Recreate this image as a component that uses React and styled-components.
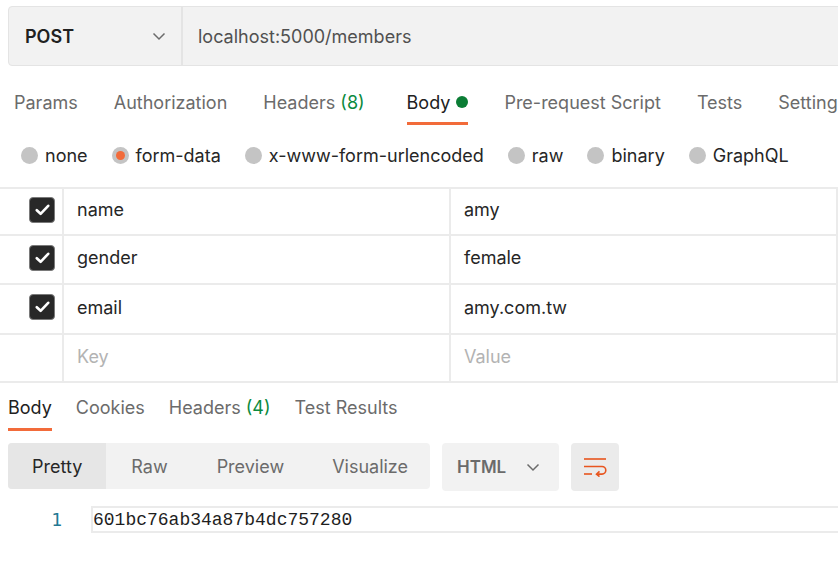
import React from "react";
import styled, { createGlobalStyle } from "styled-components";

const Global = createGlobalStyle`
  html, body { margin: 0; padding: 0; background: #fff; }
  body { font-family: Inter, "Noto Sans", sans-serif; overflow: hidden; }
  * { box-sizing: border-box; }
`;

const Page = styled.div`
  width: 838px;
  height: 573px;
  overflow: hidden;
  display: flex;
  flex-direction: column;
`;

const UrlBar = styled.div`
  margin: 6px 0 0 8px;
  width: 900px;
  height: 60px;
  display: flex;
  background: #f2f2f2;
  border: 1px solid #e4e4e4;
  border-radius: 4px;
`;

const Method = styled.div`
  width: 174px;
  display: flex;
  align-items: center;
  justify-content: space-between;
  padding: 1px 15px 0 16px;
  border-right: 2px solid #e4e4e4;
  font-weight: 600;
  font-size: 18px;
  color: #212121;
`;

const UrlText = styled.div`
  display: flex;
  align-items: center;
  padding: 1px 0 0 15px;
  font-size: 18px;
  color: #505050;
`;

const Chevron = ({ color = "#6b6b6b" }) => (
  <svg width="14" height="9" viewBox="0 0 14 9" fill="none">
    <path d="M1.5 1.5 L7 7 L12.5 1.5" stroke={color} strokeWidth="1.5" />
  </svg>
);

const TabRow = styled.div`
  display: flex;
  gap: ${(p) => p.$gap}px;
  padding-left: ${(p) => p.$pad}px;
  margin-top: ${(p) => p.$mt}px;
  white-space: nowrap;
`;

const Tab = styled.div`
  position: relative;
  display: flex;
  align-items: center;
  gap: 6px;
  font-size: 18px;
  height: ${(p) => p.$h}px;
  padding-bottom: ${(p) => p.$pb || 0}px;
  margin-right: ${(p) => p.$mr || 0}px;
  color: ${(p) => (p.$active ? "#212121" : "#6b6b6b")};
  flex-shrink: 0;
  &::after {
    content: "";
    display: ${(p) => (p.$active ? "block" : "none")};
    position: absolute;
    left: 0;
    right: 0;
    bottom: 0;
    height: 3px;
    background: #f26b3a;
  }
`;

const Count = styled.span`
  color: #0b8a3e;
`;

const Dot = styled.span`
  width: 12px;
  height: 12px;
  border-radius: 50%;
  background: #0b7d35;
`;

const RadioRow = styled.div`
  display: flex;
  align-items: center;
  height: 62px;
  padding: 0 0 1px 21px;
  white-space: nowrap;
`;

const RadioItem = styled.label`
  display: flex;
  align-items: center;
  gap: 7px;
  font-size: 18px;
  color: #262626;
  margin-right: ${(p) => p.$mr}px;
`;

const RadioCircle = styled.span`
  width: 17px;
  height: 17px;
  border-radius: 50%;
  background: #c4c4c4;
  display: flex;
  align-items: center;
  justify-content: center;
  &::after {
    content: "";
    display: ${(p) => (p.$on ? "block" : "none")};
    width: 9px;
    height: 9px;
    border-radius: 50%;
    background: #f26b3a;
  }
`;

const Table = styled.div`
  width: 838px;
  border-top: 2px solid #ebebeb;
`;

const Row = styled.div`
  display: grid;
  grid-template-columns: 64px 387px 387px;
  height: ${(p) => p.$h}px;
  border-bottom: 2px solid #ebebeb;
`;

const Cell = styled.div`
  display: flex;
  align-items: center;
  justify-content: ${(p) => (p.$center ? "flex-end" : "flex-start")};
  padding: ${(p) => (p.$center ? "0 7px 4px 0" : "0 0 4px 13px")};
  border-right: 2px solid #ebebeb;
  font-size: 18px;
  color: ${(p) => (p.$ph ? "#b3b3b3" : "#262626")};
`;

const Check = styled.span`
  width: 26px;
  height: 26px;
  border-radius: 4px;
  background: #282828;
  border: 1.5px solid #7a7a7a;
  display: flex;
  align-items: center;
  justify-content: center;
`;

const CheckBox = () => (
  <Check>
    <svg width="15" height="12" viewBox="0 0 15 12" fill="none">
      <path d="M1.8 6.2 L5.6 9.8 L13.2 1.8" stroke="#fff" strokeWidth="2.6" strokeLinecap="round" strokeLinejoin="round" />
    </svg>
  </Check>
);

const Toolbar = styled.div`
  display: flex;
  align-items: flex-start;
  gap: 12px;
  margin: 12px 0 0 8px;
`;

const Segmented = styled.div`
  display: flex;
  height: 46px;
  width: 422px;
  background: #f2f2f2;
  border-radius: 4px;
  overflow: hidden;
`;

const Segment = styled.div`
  display: flex;
  align-items: center;
  padding: 0 ${(p) => p.$px}px;
  font-size: 18px;
  color: ${(p) => (p.$active ? "#262626" : "#6b6b6b")};
  background: ${(p) => (p.$active ? "#e6e6e6" : "transparent")};
`;

const Dropdown = styled.div`
  width: 117px;
  height: 48px;
  background: #f2f2f2;
  border-radius: 4px;
  display: flex;
  align-items: center;
  justify-content: space-between;
  padding: 0 19px 0 15px;
  font-weight: 600;
  font-size: 17px;
  color: #6b6b6b;
`;

const IconBtn = styled.div`
  width: 48px;
  height: 48px;
  border-radius: 4px;
  background: #ebebeb;
  display: flex;
  align-items: center;
  justify-content: center;
`;

const CodeArea = styled.div`
  display: flex;
  align-items: center;
  margin-top: 15px;
`;

const LineNo = styled.div`
  width: 91px;
  padding-right: 29px;
  text-align: right;
  font-family: "DejaVu Sans Mono", "Liberation Mono", monospace;
  font-size: 18px;
  color: #237893;
`;

const CodeLine = styled.div`
  flex: 1;
  height: 27px;
  border: 2.5px solid #ebebeb;
  border-right: none;
  display: flex;
  align-items: center;
  font-family: "Liberation Mono", monospace;
  font-size: 18px;
  color: #1e1e1e;
`;

const rows = [
  ["name", "amy", 47],
  ["gender", "female", 49],
  ["email", "amy.com.tw", 50],
];

export default function App() {
  return (
    <Page>
      <Global />
      <UrlBar>
        <Method>
          POST
          <Chevron />
        </Method>
        <UrlText>localhost:5000/members</UrlText>
      </UrlBar>

      <TabRow $gap={36} $pad={14} $mt={13}>
        <Tab $h={46}>Params</Tab>
        <Tab $h={46}>Authorization</Tab>
        <Tab $h={46} $mr={6}>
          <span>
            Headers <Count>(8)</Count>
          </span>
        </Tab>
        <Tab $h={46} $active>
          Body <Dot />
        </Tab>
        <Tab $h={46}>Pre-request Script</Tab>
        <Tab $h={46}>Tests</Tab>
        <Tab $h={46}>Settings</Tab>
      </TabRow>

      <RadioRow>
        <RadioItem $mr={24}>
          <RadioCircle />
          none
        </RadioItem>
        <RadioItem $mr={24}>
          <RadioCircle $on />
          form-data
        </RadioItem>
        <RadioItem $mr={24}>
          <RadioCircle />
          x-www-form-urlencoded
        </RadioItem>
        <RadioItem $mr={24}>
          <RadioCircle />
          raw
        </RadioItem>
        <RadioItem $mr={24}>
          <RadioCircle />
          binary
        </RadioItem>
        <RadioItem $mr={0}>
          <RadioCircle />
          GraphQL
        </RadioItem>
      </RadioRow>

      <Table>
        {rows.map(([k, v, h]) => (
          <Row key={k} $h={h}>
            <Cell $center>
              <CheckBox />
            </Cell>
            <Cell>{k}</Cell>
            <Cell>{v}</Cell>
          </Row>
        ))}
        <Row $h={48}>
          <Cell $center />
          <Cell $ph>Key</Cell>
          <Cell $ph>Value</Cell>
        </Row>
      </Table>

      <TabRow $gap={24} $pad={8} $mt={6}>
        <Tab $h={42} $pb={6} $active>Body</Tab>
        <Tab $h={42} $pb={6}>Cookies</Tab>
        <Tab $h={42} $pb={6}>
          <span>
            Headers <Count>(4)</Count>
          </span>
        </Tab>
        <Tab $h={42} $pb={6}>Test Results</Tab>
      </TabRow>

      <Toolbar>
        <Segmented>
          <Segment $active $px={24}>Pretty</Segment>
          <Segment $px={25}>Raw</Segment>
          <Segment $px={24}>Preview</Segment>
          <Segment $px={24}>Visualize</Segment>
        </Segmented>
        <Dropdown>
          HTML
          <Chevron />
        </Dropdown>
        <IconBtn>
          <svg width="24" height="20" viewBox="0 0 24 20" fill="none" stroke="#e8551f" strokeWidth="1.6">
            <path d="M1 2 H23" />
            <path d="M1 9.5 H19 a3.8 3.8 0 0 1 0 7.6 H14" />
            <path d="M16.5 14.3 L13.5 17.1 L16.5 19.6" />
            <path d="M1 17 H9" />
          </svg>
        </IconBtn>
      </Toolbar>

      <CodeArea>
        <LineNo>1</LineNo>
        <CodeLine>601bc76ab34a87b4dc757280</CodeLine>
      </CodeArea>
    </Page>
  );
}
